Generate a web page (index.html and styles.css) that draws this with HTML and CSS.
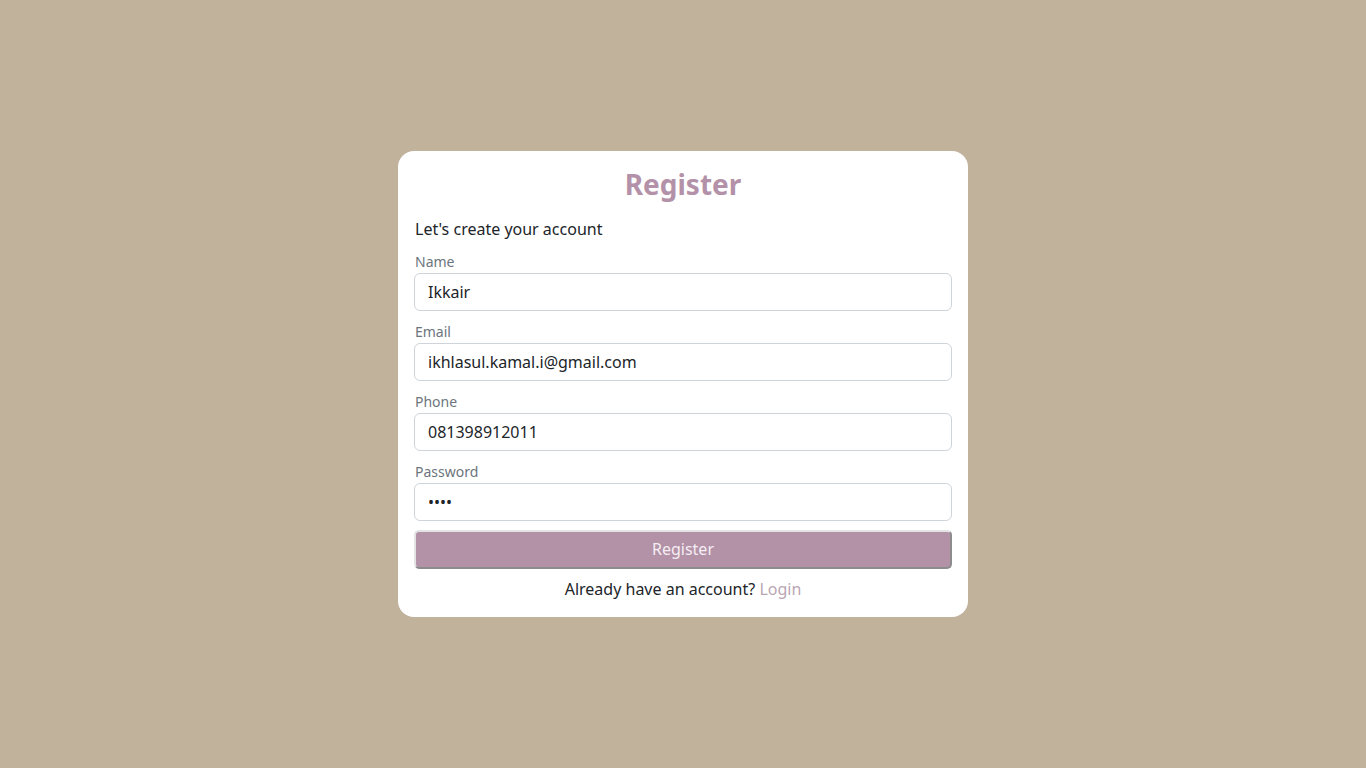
FILE: index.html
```html
<!DOCTYPE html>
<html lang="en">
<head>
<meta charset="utf-8">
<title>Register</title>
<link rel="stylesheet" href="styles.css">
</head>
<body>
<main class="page">
  <form class="card">
    <h1 class="title">Register</h1>
    <p class="subtitle">Let's create your account</p>
    <div class="field">
      <label class="label" for="name">Name</label>
      <input class="input" id="name" type="text" value="Ikkair">
    </div>
    <div class="field">
      <label class="label" for="email">Email</label>
      <input class="input" id="email" type="email" value="ikhlasul.kamal.i@gmail.com">
    </div>
    <div class="field">
      <label class="label" for="phone">Phone</label>
      <input class="input" id="phone" type="text" value="081398912011">
    </div>
    <div class="field">
      <label class="label" for="password">Password</label>
      <input class="input" id="password" type="password" value="1234">
    </div>
    <button class="btn" type="button">Register</button>
    <p class="footer">Already have an account? <a class="link" href="#">Login</a></p>
  </form>
</main>
</body>
</html>
```
FILE: styles.css
```css
* { box-sizing: border-box; }
html, body { margin: 0; padding: 0; }
body {
  background: #c1b29c;
  font-family: "Noto Sans", "Open Sans", sans-serif;
  color: #212529;
  height: 768px;
}
.page {
  height: 768px;
  display: flex;
  align-items: center;
  justify-content: center;
}
.card {
  width: 570px;
  background: #fff;
  border-radius: 16px;
  padding: 15px 16px 16px;
}
.title {
  margin: 0;
  text-align: center;
  font-size: 28px;
  font-weight: 700;
  color: #b391a8;
  line-height: 36px;
}
.subtitle {
  margin: 17px 0 12px;
  padding-left: 1px;
  font-size: 16px;
  line-height: 20px;
}
.field {
  display: flex;
  flex-direction: column;
  margin-bottom: 10px;
}
.field:last-of-type { margin-bottom: 9px; }
.label {
  padding-left: 1px;
  font-size: 14px;
  line-height: 22px;
  color: #6c757d;
}
.input {
  height: 38px;
  border: 1px solid #ced4da;
  border-radius: 6px;
  padding: 6px 12px 6px 13px;
  font-family: inherit;
  font-size: 16px;
  color: #212529;
  background: #fff;
}
.btn {
  display: block;
  width: 100%;
  height: 39px;
  padding: 0 6px 2px;
  background: #b391a7;
  color: #f5eef3;
  font-family: inherit;
  font-size: 16px;
  border-style: solid;
  border-width: 2px;
  border-color: #e3e3e3 #8c8c8c #8c8c8c #e3e3e3;
  border-radius: 5px;
}
.footer {
  margin: 8px 0 0;
  text-align: center;
  font-size: 16px;
  line-height: 24px;
}
.link {
  color: #b9a6b3;
  text-decoration: none;
}
```
